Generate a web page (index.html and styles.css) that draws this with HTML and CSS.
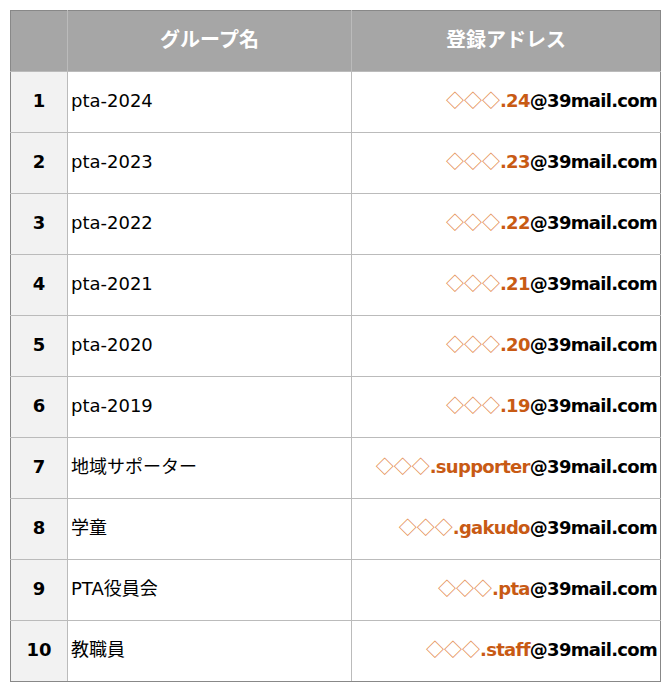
FILE: index.html
```html
<!DOCTYPE html>
<html lang="ja">
<head>
<meta charset="utf-8">
<link rel="stylesheet" href="styles.css">
</head>
<body>
<table class="groups">
  <colgroup><col class="c-num"><col class="c-name"><col class="c-addr"></colgroup>
  <thead>
    <tr><th></th><th>グループ名</th><th>登録アドレス</th></tr>
  </thead>
  <tbody>
    <tr><td class="num">1</td><td class="name">pta-2024</td><td class="addr"><span class="hl"><span class="dia">◇◇◇</span>.24</span>@39mail.com</td></tr>
    <tr><td class="num">2</td><td class="name">pta-2023</td><td class="addr"><span class="hl"><span class="dia">◇◇◇</span>.23</span>@39mail.com</td></tr>
    <tr><td class="num">3</td><td class="name">pta-2022</td><td class="addr"><span class="hl"><span class="dia">◇◇◇</span>.22</span>@39mail.com</td></tr>
    <tr><td class="num">4</td><td class="name">pta-2021</td><td class="addr"><span class="hl"><span class="dia">◇◇◇</span>.21</span>@39mail.com</td></tr>
    <tr><td class="num">5</td><td class="name">pta-2020</td><td class="addr"><span class="hl"><span class="dia">◇◇◇</span>.20</span>@39mail.com</td></tr>
    <tr><td class="num">6</td><td class="name">pta-2019</td><td class="addr"><span class="hl"><span class="dia">◇◇◇</span>.19</span>@39mail.com</td></tr>
    <tr><td class="num">7</td><td class="name">地域サポーター</td><td class="addr"><span class="hl"><span class="dia">◇◇◇</span>.supporter</span>@39mail.com</td></tr>
    <tr><td class="num">8</td><td class="name">学童</td><td class="addr"><span class="hl"><span class="dia">◇◇◇</span>.gakudo</span>@39mail.com</td></tr>
    <tr><td class="num">9</td><td class="name">PTA役員会</td><td class="addr"><span class="hl"><span class="dia">◇◇◇</span>.pta</span>@39mail.com</td></tr>
    <tr><td class="num">10</td><td class="name">教職員</td><td class="addr"><span class="hl"><span class="dia">◇◇◇</span>.staff</span>@39mail.com</td></tr>
  </tbody>
</table>
</body>
</html>
```
FILE: styles.css
```css
html, body {
  margin: 0;
  padding: 0;
  background: #fff;
}
body {
  padding: 10px;
  font-family: "DejaVu Sans", "Noto Sans CJK JP", sans-serif;
  font-size: 18px;
  color: #000;
}
.groups {
  border-collapse: collapse;
  table-layout: fixed;
  width: 650px;
  border: 1px solid #888;
}
.c-num { width: 57px; }
.c-name { width: 284px; }
.c-addr { width: 309px; }
.groups th {
  background: #a6a6a6;
  color: #fff;
  font-weight: bold;
  font-size: 20px;
  height: 61px;
  padding: 0 0 4px;
  box-sizing: border-box;
  border: 1px solid #bbb;
  border-top-color: #888;
  font-family: "Noto Sans CJK JP", sans-serif;
  line-height: 1;
}
.groups th:first-child { border-left-color: #888; }
.groups th:last-child { border-right-color: #888; }
.groups td {
  height: 61px;
  box-sizing: border-box;
  padding: 0 3px 3px;
  border: 1px solid #bbb;
  vertical-align: middle;
  line-height: 1.2;
}
.groups td.num {
  background: #f2f2f2;
  font-weight: bold;
  text-align: center;
  border-left-color: #888;
}
.groups td.addr {
  text-align: right;
  font-weight: bold;
  letter-spacing: -0.7px;
  border-right-color: #888;
}
.groups tr:last-child td { border-bottom-color: #888; }
.hl { color: #c85a14; }
.dia {
  font-family: "Noto Sans CJK JP", sans-serif;
  font-weight: normal;
  letter-spacing: 0;
  color: #e38a4c;
}
```
